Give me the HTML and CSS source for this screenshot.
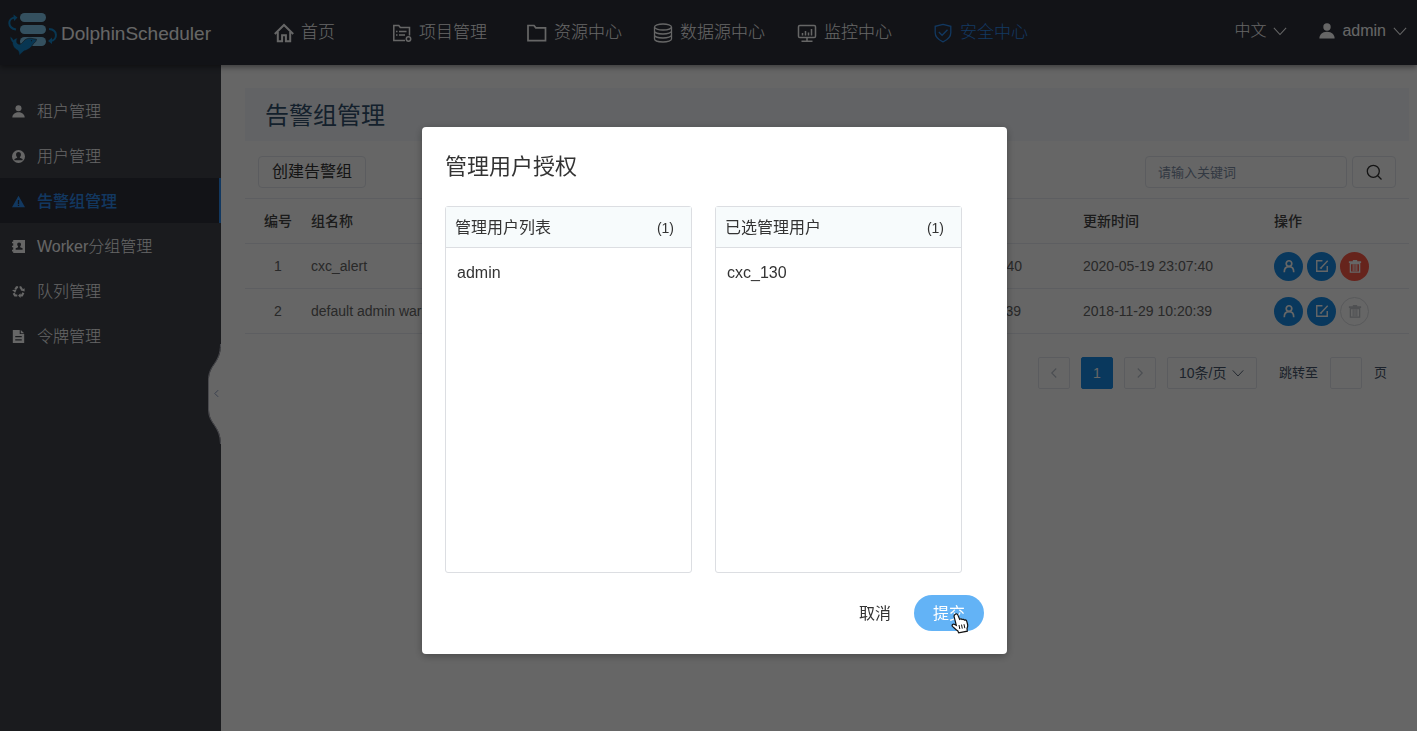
FILE: index.html
```html
<!DOCTYPE html>
<html lang="zh-CN">
<head>
<meta charset="utf-8">
<title>DolphinScheduler</title>
<link rel="stylesheet" href="styles.css">
</head>
<body>
<svg class="sprite" aria-hidden="true">
  <symbol id="i-person" viewBox="0 0 16 16"><circle cx="8" cy="4" r="3.7"/><path d="M0.4 15.4c0-3.4 2.6-6.6 7.6-6.6s7.6 3.2 7.6 6.6z"/></symbol>
  <symbol id="i-down" viewBox="0 0 16 16"><path d="M1 4.5l7 7.5 7-7.5" fill="none" stroke="currentColor" stroke-width="1.2"/></symbol>
  <symbol id="i-left" viewBox="0 0 16 16"><path d="M11 2L5 8l6 6" fill="none" stroke="currentColor" stroke-width="1.5"/></symbol>
  <symbol id="i-right" viewBox="0 0 16 16"><path d="M5 2l6 6-6 6" fill="none" stroke="currentColor" stroke-width="1.5"/></symbol>
  <symbol id="i-auth" viewBox="0 0 16 16"><g fill="none" stroke="currentColor" stroke-width="1.9"><circle cx="8" cy="5.2" r="3.2"/><path d="M2.6 15c0-4.200 1.800-6.200 5.400-6.200s5.400 2 5.400 6.200"/></g></symbol>
  <symbol id="i-edit" viewBox="0 0 16 16"><g fill="none" stroke="currentColor" stroke-width="1.6"><path d="M8.500 2H2v12h12V8"/><path d="M7 10l7.500-8"/><path d="M5.500 10.300H8"/></g></symbol>
  <symbol id="i-trash" viewBox="0 0 16 16"><path d="M5.500 1h5v1.600H15v2H1v-2h4.500z"/><path d="M2.700 5.200h10.600V15H2.700z" fill="none" stroke="currentColor" stroke-width="1.500"/><path d="M5.900 6v8M8 6v8M10.100 6v8" fill="none" stroke="currentColor" stroke-width="1.100"/></symbol>
</svg>

<header class="topbar">
  <a class="brand" href="#">
    <svg class="brand-logo" viewBox="0 0 50 44" aria-hidden="true">
      <g fill="#83c9ee"><rect x="12" y="1" width="26" height="9" rx="4.500"/><rect x="12" y="13" width="26" height="9" rx="4.500"/><rect x="12" y="25" width="26" height="9" rx="4.500"/></g>
      <g fill="none" stroke="#1487cc" stroke-width="2"><path d="M8 17.500C-1 16 -.5 6 7 5.500"/><path d="M41 17c9 .5 9 11 1.500 12"/></g>
      <path fill="#1487cc" d="M5.500 2.500L9.500 5.500 6 9zM44 25.500v6.500L40 29z"/>
      <path fill="#1487cc" stroke="#2d303a" stroke-width=".6" d="M2 24.500C4 25.500 5 26.500 5.500 28C6.500 27 7.500 26 9.500 26C8.500 28 8.500 29.500 9 31C11 33 13 32.500 15 30C17.500 26.500 21 25.500 25 26.700L28.500 27.200C28.500 29 27 30.500 25.500 31.500C23 36 20 38 16 39L11 43.500C11.300 41.500 11 40 10 38.500C6 36.500 4.500 33.500 4.500 30.500C3 29 2.300 27.500 2 24.500z"/>
      <circle cx="23.500" cy="28.700" r=".6" fill="#2d303a"/>
    </svg>
    <span>DolphinScheduler</span>
  </a>
  <nav class="mainnav">
    <a href="#"><svg viewBox="0 0 20 20"><path d="M.8 11L10 2l9.200 9" fill="none" stroke="currentColor" stroke-width="2"/><path d="M3.800 9v9.200h4.300v-6h3.800v6h4.300V9" fill="none" stroke="currentColor" stroke-width="2"/></svg>首页</a>
    <a href="#"><svg viewBox="0 0 20 20"><g fill="none" stroke="currentColor" stroke-width="1.500"><path d="M13 17.500H1.800V2.500h5l1.500 2h9.200v8"/><circle cx="16.500" cy="16" r="2.200"/><path d="M7 8.500h7.500M7 12h6M4 8.500h1.500M4 12h1.500"/></g></svg>项目管理</a>
    <a href="#"><svg viewBox="0 0 20 20"><path d="M1 17.700V2.500h6l1.800 2.300H18.500v12.900z" fill="none" stroke="currentColor" stroke-width="1.700"/></svg>资源中心</a>
    <a href="#"><svg viewBox="0 0 20 20"><g fill="none" stroke="currentColor" stroke-width="1.300"><ellipse cx="10" cy="4" rx="8.500" ry="3"/><path d="M1.500 4v12c0 1.700 3.800 3 8.500 3s8.500-1.300 8.500-3V4M1.500 8c0 1.700 3.800 3 8.500 3s8.500-1.300 8.500-3M1.500 12c0 1.700 3.800 3 8.500 3s8.500-1.300 8.500-3"/></g></svg>数据源中心</a>
    <a href="#"><svg viewBox="0 0 20 20"><g fill="none" stroke="currentColor" stroke-width="1.500"><rect x="1.500" y="2.500" width="17" height="12" rx="1.300"/><path d="M10 14.500v3.500M4.500 18.200h11M5.500 12.500V10M8.500 12.500V8M11.500 12.500V9.500M14.500 12.500V6"/></g></svg>监控中心</a>
    <a class="is-active" href="#"><svg viewBox="0 0 20 20"><path d="M10 1.300l7.800 2v6.500c0 4.300-3.200 7-7.800 9-4.600-2-7.800-4.700-7.800-9V3.300z" fill="none" stroke="currentColor" stroke-width="1.300"/><path d="M5.800 9l3.300 3.300 5.400-5.600" fill="none" stroke="currentColor" stroke-width="1.300"/></svg>安全中心</a>
  </nav>
  <div class="account">
    <button type="button">中文<svg><use href="#i-down"/></svg></button>
    <button type="button"><svg class="user"><use href="#i-person"/></svg>admin<svg><use href="#i-down"/></svg></button>
  </div>
</header>

<div class="layout">
  <aside class="sidebar">
    <nav>
      <a href="#"><svg><use href="#i-person"/></svg>租户管理</a>
      <a href="#"><svg viewBox="0 0 16 16"><path fill-rule="evenodd" d="M8 0a8 8 0 100 16A8 8 0 008 0zM8 2.500c2 0 3 1.500 3 3.200 0 1.300-.6 2.200-1.300 2.900v.9l3.300 1.500v1.500H3V11l3.300-1.500v-.9C5.600 7.900 5 7 5 5.700c0-1.700 1-3.200 3-3.200z"/></svg>用户管理</a>
      <a class="is-active" href="#"><svg viewBox="0 0 16 16"><path fill-rule="evenodd" d="M8 1l8 14H0zM7.200 6v5h1.600V6zm0 6v1.600h1.600V12z"/></svg>告警组管理</a>
      <a href="#"><svg viewBox="0 0 16 16"><path fill-rule="evenodd" d="M1.500 0H16v16H1.500v-2H0v-2h1.500V9H0V7h1.500V4H0V2h1.500zM8.700 3c-1.700 0-2.300 1.200-2.300 2.500 0 1 .4 1.700 1 2.300v1L4.500 10v2h8.500v-2l-2.900-1.200v-1c.6-.6 1-1.300 1-2.300C11.100 4.200 10.400 3 8.700 3z"/></svg>Worker分组管理</a>
      <a href="#"><svg viewBox="0 0 16 16"><g fill="none" stroke="currentColor" stroke-width="2.600"><path d="M4 5.500L5.700 2.700H7.500M9.300 2.700h1.200L12.500 6M14 9.500l-1.700 3.500H10M6.500 13H3.700L2 10"/></g><path d="M0 6.300l5.500-.6L4 9.500zM10.500 6.500L15.500 4v4zM10.500 10v6l-3-3z"/></svg>队列管理</a>
      <a href="#"><svg viewBox="0 0 16 16"><path fill-rule="evenodd" d="M1 0h8.500v5H15v11H1zM10.800 0L15 4h-4.200zM4 7.500V9h8V7.500zm0 4V13h8v-1.500z"/></svg>令牌管理</a>
    </nav>
    <button class="collapse" type="button" aria-label="收起菜单">
      <svg class="notch" viewBox="0 0 13 100"><path d="M13 0c0 20-12 20-12 36v30c0 14 12 16 12 34z" fill="#fff"/><path d="M12.500 0c0 20-12 20-12 36v30c0 14 12 16 12 34" fill="none" stroke="#b9b9c4"/></svg>
      <svg class="arrow"><use href="#i-left"/></svg>
    </button>
  </aside>

  <main class="content">
    <h1>告警组管理</h1>
    <div class="toolbar">
      <button class="btn" type="button">创建告警组</button>
      <form class="search">
        <input type="text" placeholder="请输入关键词" aria-label="请输入关键词">
        <button class="btn" type="button" aria-label="搜索"><svg viewBox="0 0 16 16"><g fill="none" stroke="currentColor" stroke-width="1.300"><circle cx="7.300" cy="7.300" r="6"/><path d="M11.500 11.500L15.500 15.500"/></g></svg></button>
      </form>
    </div>
    <table>
      <thead>
        <tr><th class="num">编号</th><th>组名称</th><th class="time"></th><th class="time">更新时间</th><th class="ops">操作</th></tr>
      </thead>
      <tbody>
        <tr>
          <td class="num">1</td><td>cxc_alert</td><td>2020-05-19 23:07:40</td><td>2020-05-19 23:07:40</td>
          <td><div class="actions">
            <button type="button" aria-label="授权"><svg><use href="#i-auth"/></svg></button>
            <button type="button" aria-label="编辑"><svg><use href="#i-edit"/></svg></button>
            <button class="danger" type="button" aria-label="删除"><svg><use href="#i-trash"/></svg></button>
          </div></td>
        </tr>
        <tr>
          <td class="num">2</td><td>default admin warning group</td><td>2018-11-29 10:20:39</td><td>2018-11-29 10:20:39</td>
          <td><div class="actions">
            <button type="button" aria-label="授权"><svg><use href="#i-auth"/></svg></button>
            <button type="button" aria-label="编辑"><svg><use href="#i-edit"/></svg></button>
            <button type="button" aria-label="删除" disabled><svg><use href="#i-trash"/></svg></button>
          </div></td>
        </tr>
      </tbody>
    </table>
    <div class="pager">
      <button type="button" aria-label="上一页" disabled><svg><use href="#i-left"/></svg></button>
      <button class="current" type="button">1</button>
      <button type="button" aria-label="下一页" disabled><svg><use href="#i-right"/></svg></button>
      <span class="size"><select aria-label="每页条数"><option>10条/页</option></select><svg><use href="#i-down"/></svg></span>
      <label class="jump">跳转至<input type="text">页</label>
    </div>
  </main>
</div>

<div class="overlay">
  <section class="dialog" role="dialog" aria-modal="true" aria-labelledby="dialog-title">
    <h2 id="dialog-title">管理用户授权</h2>
    <div class="transfer">
      <div class="panel">
        <div class="panel-head"><span>管理用户列表</span><small>(1)</small></div>
        <ul><li>admin</li></ul>
      </div>
      <div class="panel">
        <div class="panel-head"><span>已选管理用户</span><small>(1)</small></div>
        <ul><li>cxc_130</li></ul>
      </div>
    </div>
    <div class="dialog-foot">
      <button class="cancel" type="button">取消</button>
      <button class="submit" type="button">提交
        <svg class="pointer" viewBox="0 0 18 21" aria-hidden="true"><path d="M4.300 1.200c1.100-.7 2.200-.1 2.600.9l1.700 4.200c.8-.8 1.900-.6 2.500.2.900-.5 1.900-.2 2.300.6 1-.4 2 .1 2.300 1.100l.9 3.300c.4 1.700-.2 2.700-.6 4l.3 2.700-8.600 1.600-1-2.100c-2-1-3.300-2.700-5.200-4.300-1-1.200.3-2.700 1.700-2.200l2.100 1.100-2.200-8.700c-.2-1 .4-1.900 1.200-2.400z" fill="#fff" stroke="#111" stroke-width="1.200"/><path d="M8 12l.8 4M10.500 11.600l.8 4M13 11.200l.8 4" stroke="#111" fill="none"/></svg>
      </button>
    </div>
  </section>
</div>
</body>
</html>
```
FILE: styles.css
```css
* { box-sizing: border-box; }

body {
  margin: 0;
  min-height: 100vh;
  display: flex;
  flex-direction: column;
  font: 14px/20px "Liberation Sans", "Noto Sans CJK SC", sans-serif;
  color: #333;
  background: #fff;
}

a { color: inherit; text-decoration: none; }
button, input, select { font: inherit; color: inherit; margin: 0; }
button { padding: 0; border: 0; background: none; cursor: pointer; }
svg { display: block; flex: none; fill: currentColor; }
.sprite { position: absolute; width: 0; height: 0; }

/* Top bar */
.topbar {
  position: relative;
  z-index: 2;
  height: 65px;
  display: flex;
  padding: 0 10px 0 8px;
  background: #2d303a;
  color: #fff;
  box-shadow: 0 2px 6px rgba(0, 0, 0, .45);
}
.brand { width: 266px; display: flex; align-items: center; gap: 3px; padding-top: 2px; font-size: 19px; line-height: 24px; }
.brand-logo { width: 50px; height: 44px; }
.mainnav {
  display: grid;
  grid-template-columns: 118px 135px 126px 144px 136px auto;
  font-size: 17px;
  font-weight: 300;
}
.mainnav a { display: flex; align-items: center; gap: 7px; white-space: nowrap; }
.mainnav svg { width: 20px; height: 20px; }
.mainnav .is-active { color: #2d8cf0; }
.account { margin-left: auto; height: 61px; display: flex; gap: 32px; font-size: 16px; font-weight: 300; }
.account button { display: flex; align-items: center; gap: 7px; }
.account svg { width: 14px; height: 14px; }
.account .user { width: 16px; height: 16px; }

/* Sidebar */
.layout { flex: 1; display: flex; }
.sidebar {
  position: relative;
  width: 221px;
  flex: none;
  padding-top: 23px;
  background: #41444c;
  color: #fff;
  font-size: 16px;
  font-weight: 300;
}
.sidebar nav a { height: 45px; display: flex; align-items: center; gap: 12px; padding: 2px 0 0 12px; }
.sidebar nav svg { width: 13px; height: 13px; }
.sidebar nav .is-active { background: #2d303a; color: #2d8cf0; border-right: 2px solid #2d8cf0; font-weight: 500; }
.collapse { position: absolute; right: 0; top: 279px; width: 13px; height: 100px; color: #7d8fb8; }
.notch { width: 13px; height: 100px; }
.arrow { position: absolute; left: 4px; top: 45px; width: 9px; height: 9px; }

/* Content */
.content { flex: 1; min-width: 0; padding: 23px 8px 0 24px; }
h1 {
  margin: 0;
  padding: 2px 20px 0;
  font-size: 24px;
  font-weight: 400;
  line-height: 51px;
  background: #f5f8fc;
  color: #34526e;
}
.toolbar { display: flex; justify-content: space-between; padding: 15px 13px 10px; }
.btn {
  height: 32px;
  padding: 0 13px;
  border: 1px solid #e4e7ee;
  border-radius: 4px;
  font-size: 16px;
}
.search { display: flex; gap: 5px; }
.search input {
  width: 202px;
  height: 32px;
  padding: 0 12px;
  border: 1px solid #e4e7ee;
  border-radius: 4px;
  background: none;
  font-size: 13px;
}
.search input::placeholder { color: #7e8ea5; }
.search svg { width: 16px; height: 16px; }

table { width: 100%; border-collapse: collapse; table-layout: fixed; }
tr { border-bottom: 1px solid #e8ebf2; }
thead tr { border-top: 1px solid #e8ebf2; }
th, td { height: 45px; padding: 0; text-align: left; font-weight: 400; color: #666; }
th { font-weight: 500; color: #444; }
.num { width: 66px; text-align: center; }
.time { width: 191px; }
.ops { width: 135px; }
.actions { display: flex; gap: 4px; }
.actions button {
  width: 29px;
  height: 29px;
  display: grid;
  place-items: center;
  border-radius: 50%;
  background: #188de8;
  color: #fff;
}
.actions svg { width: 14px; height: 14px; }
.actions .danger { background: #ff5a48; }
.actions button:disabled { border: 1px solid #dcdee2; background: none; color: #c5c8ce; }

.pager { display: flex; justify-content: flex-end; gap: 11px; padding: 23px 22px 0 0; color: #47566b; }
.pager button, .pager input, .size { height: 32px; border: 1px solid #e4e7ee; border-radius: 2px; background: none; }
.pager button { width: 32px; display: grid; place-items: center; }
.pager button:disabled { color: #bcc3cd; }
.pager button svg { width: 12px; height: 12px; }
.pager .current { border-color: #188de8; background: #188de8; color: #fff; }
.size { position: relative; width: 90px; display: flex; align-items: center; }
.size select { width: 100%; height: 100%; padding: 0 11px; border: 0; background: none; appearance: none; }
.size svg { position: absolute; right: 12px; width: 12px; height: 12px; pointer-events: none; }
.jump { display: flex; align-items: center; gap: 12px; padding-left: 11px; font-size: 13px; }
.jump input { width: 32px; padding: 0 4px; }

/* Dialog */
.overlay {
  position: fixed;
  inset: 0;
  z-index: 10;
  display: flex;
  justify-content: center;
  align-items: flex-start;
  padding: 127px 0 0 12px;
  background: rgba(0, 0, 0, .6);
}
.dialog {
  width: 585px;
  padding: 23px;
  border-radius: 4px;
  background: #fff;
  box-shadow: 0 2px 8px rgba(0, 0, 0, .3);
}
h2 { margin: 0; padding: 1px 0 23px; font-size: 22px; font-weight: 400; line-height: 32px; }
.transfer { display: grid; grid-template-columns: 247px 247px; gap: 23px; font-size: 16px; }
.panel { height: 367px; border: 1px solid #dcdee2; border-radius: 3px; }
.panel-head {
  height: 41px;
  display: flex;
  justify-content: space-between;
  align-items: center;
  padding: 1px 17px 0 9px;
  border-bottom: 1px solid #dcdee2;
  background: #f7fbfc;
}
.panel-head small { font-size: 14px; }
.panel ul { margin: 0; padding: 14px 11px; list-style: none; }
.panel li { line-height: 22px; }
.dialog-foot { display: flex; justify-content: flex-end; gap: 23px; margin-top: 22px; font-size: 16px; }
.dialog-foot button { padding-top: 2px; }
.submit { position: relative; width: 70px; height: 36px; border-radius: 18px; background: #63b3f6; color: #fff; }
.pointer { position: absolute; left: 37px; top: 18px; width: 18px; height: 21px; }
```
